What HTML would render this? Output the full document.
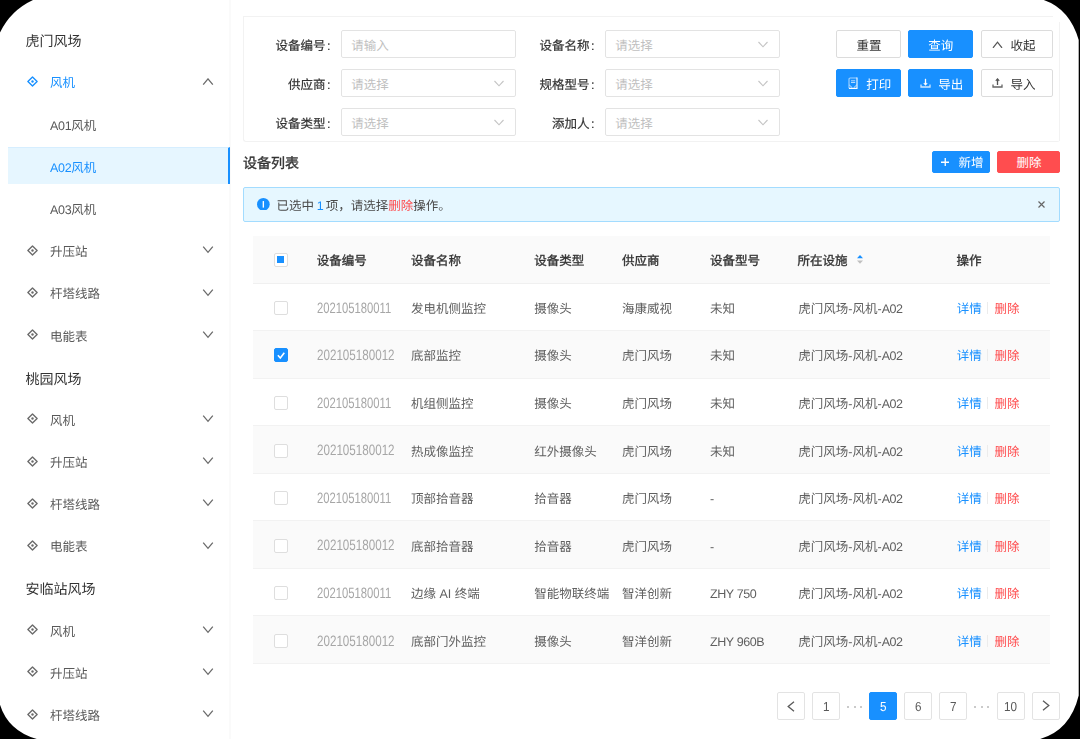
<!DOCTYPE html><html lang="zh-CN"><head><meta charset="utf-8"><style>
*{box-sizing:border-box;margin:0;padding:0}
html,body{width:1080px;height:739px;overflow:hidden;background:#000}
body{font-family:"Liberation Sans",sans-serif;text-rendering:geometricPrecision;font-size:12.5px;color:#595959;position:relative}
.frame{position:absolute;left:0;top:0;width:1080px;height:739px;background:#fff;overflow:hidden}
.content{position:absolute;left:0;top:0;width:1080px;height:739px;filter:blur(0.45px)}
.abs{position:absolute;white-space:nowrap}
.t{position:absolute;white-space:nowrap;line-height:20px;height:20px}
.side{position:absolute;left:0;top:0;width:231px;height:739px;border-right:2px solid #fafafa}
.gt{position:absolute;left:26px;font-size:14px;color:#333;line-height:20px;height:20px;white-space:nowrap}
.it{position:absolute;left:50px;font-size:12.5px;color:#595959;line-height:20px;height:20px;white-space:nowrap}
.ico{position:absolute;left:26.5px;width:11px;height:11px}
.chev{position:absolute;left:202px;width:12px;height:8px}
.inp{position:absolute;width:175px;height:27.6px;border:1px solid #e3e3e3;border-radius:2px;background:#fff}
.ph{position:absolute;left:10px;top:4px;font-size:12.5px;color:#c4c4c4;line-height:20px}
.btn{position:absolute;height:28px;border-radius:2px;border:1px solid #dcdcdc;background:#fff}
.btn.p{background:#1890ff;border-color:#1890ff}
.lat{display:inline-block;transform-origin:0 50%}
.num{font-size:15px;transform:scaleX(.75);color:#a6a6a6}
.cb{position:absolute;left:274px;width:14px;height:14px;border:1px solid #dedede;border-radius:2px;background:#fff}
.pg{position:absolute;top:692px;width:28px;height:28px;border:1px solid #e3e3e3;border-radius:2px;background:#fff}
</style></head><body><div class="frame"><div class="content">
<div class="side"></div>
<div class="t" style="left:25.5px;top:31.00px;font-size:14px;color:#333;font-weight:400;">虎门风场</div>
<svg class="ico" style="top:75.79px" viewBox="0 0 11 11"><path d="M5.5 0.9 L10.1 5.5 L5.5 10.1 L0.9 5.5 Z" fill="none" stroke="#1890ff" stroke-width="1.35" stroke-linejoin="round"/><circle cx="5.5" cy="5.5" r="1.2" fill="#1890ff"/></svg>
<div class="t" style="left:50px;top:73.39px;font-size:12.5px;color:#1890ff;font-weight:400;">风机</div>
<svg class="chev" style="top:77.59px" viewBox="0 0 12 8"><path d="M1.2 6.6 L6 0.9 L10.8 6.6" fill="none" stroke="#6a6a6a" stroke-width="1.3"/></svg>
<div class="t" style="left:50px;top:115.58px;font-size:12.5px;color:#595959;font-weight:400;"><span class="lat" style="letter-spacing:-0.3px">A01</span>风机</div>
<div class="abs" style="left:8px;top:147px;width:222px;height:37px;background:#e6f6ff;border-top:1px solid #d6eeff;border-right:2.5px solid #1890ff"></div>
<div class="t" style="left:50px;top:157.77px;font-size:12.5px;color:#1890ff;font-weight:400;"><span class="lat" style="letter-spacing:-0.3px">A02</span>风机</div>
<div class="t" style="left:50px;top:199.96px;font-size:12.5px;color:#595959;font-weight:400;"><span class="lat" style="letter-spacing:-0.3px">A03</span>风机</div>
<svg class="ico" style="top:244.55px" viewBox="0 0 11 11"><path d="M5.5 0.9 L10.1 5.5 L5.5 10.1 L0.9 5.5 Z" fill="none" stroke="#6b6b6b" stroke-width="1.35" stroke-linejoin="round"/><circle cx="5.5" cy="5.5" r="1.2" fill="#6b6b6b"/></svg>
<div class="t" style="left:50px;top:242.15px;font-size:12.5px;color:#595959;font-weight:400;">升压站</div>
<svg class="chev" style="top:246.35px" viewBox="0 0 12 8"><path d="M1.2 0.6 L6 6.3 L10.8 0.6" fill="none" stroke="#6a6a6a" stroke-width="1.3"/></svg>
<svg class="ico" style="top:286.74px" viewBox="0 0 11 11"><path d="M5.5 0.9 L10.1 5.5 L5.5 10.1 L0.9 5.5 Z" fill="none" stroke="#6b6b6b" stroke-width="1.35" stroke-linejoin="round"/><circle cx="5.5" cy="5.5" r="1.2" fill="#6b6b6b"/></svg>
<div class="t" style="left:50px;top:284.34px;font-size:12.5px;color:#595959;font-weight:400;">杆塔线路</div>
<svg class="chev" style="top:288.54px" viewBox="0 0 12 8"><path d="M1.2 0.6 L6 6.3 L10.8 0.6" fill="none" stroke="#6a6a6a" stroke-width="1.3"/></svg>
<svg class="ico" style="top:328.93px" viewBox="0 0 11 11"><path d="M5.5 0.9 L10.1 5.5 L5.5 10.1 L0.9 5.5 Z" fill="none" stroke="#6b6b6b" stroke-width="1.35" stroke-linejoin="round"/><circle cx="5.5" cy="5.5" r="1.2" fill="#6b6b6b"/></svg>
<div class="t" style="left:50px;top:326.53px;font-size:12.5px;color:#595959;font-weight:400;">电能表</div>
<svg class="chev" style="top:330.73px" viewBox="0 0 12 8"><path d="M1.2 0.6 L6 6.3 L10.8 0.6" fill="none" stroke="#6a6a6a" stroke-width="1.3"/></svg>
<div class="t" style="left:25.5px;top:368.52px;font-size:14px;color:#333;font-weight:400;">桃园风场</div>
<svg class="ico" style="top:413.31px" viewBox="0 0 11 11"><path d="M5.5 0.9 L10.1 5.5 L5.5 10.1 L0.9 5.5 Z" fill="none" stroke="#6b6b6b" stroke-width="1.35" stroke-linejoin="round"/><circle cx="5.5" cy="5.5" r="1.2" fill="#6b6b6b"/></svg>
<div class="t" style="left:50px;top:410.91px;font-size:12.5px;color:#595959;font-weight:400;">风机</div>
<svg class="chev" style="top:415.11px" viewBox="0 0 12 8"><path d="M1.2 0.6 L6 6.3 L10.8 0.6" fill="none" stroke="#6a6a6a" stroke-width="1.3"/></svg>
<svg class="ico" style="top:455.50px" viewBox="0 0 11 11"><path d="M5.5 0.9 L10.1 5.5 L5.5 10.1 L0.9 5.5 Z" fill="none" stroke="#6b6b6b" stroke-width="1.35" stroke-linejoin="round"/><circle cx="5.5" cy="5.5" r="1.2" fill="#6b6b6b"/></svg>
<div class="t" style="left:50px;top:453.10px;font-size:12.5px;color:#595959;font-weight:400;">升压站</div>
<svg class="chev" style="top:457.30px" viewBox="0 0 12 8"><path d="M1.2 0.6 L6 6.3 L10.8 0.6" fill="none" stroke="#6a6a6a" stroke-width="1.3"/></svg>
<svg class="ico" style="top:497.69px" viewBox="0 0 11 11"><path d="M5.5 0.9 L10.1 5.5 L5.5 10.1 L0.9 5.5 Z" fill="none" stroke="#6b6b6b" stroke-width="1.35" stroke-linejoin="round"/><circle cx="5.5" cy="5.5" r="1.2" fill="#6b6b6b"/></svg>
<div class="t" style="left:50px;top:495.29px;font-size:12.5px;color:#595959;font-weight:400;">杆塔线路</div>
<svg class="chev" style="top:499.49px" viewBox="0 0 12 8"><path d="M1.2 0.6 L6 6.3 L10.8 0.6" fill="none" stroke="#6a6a6a" stroke-width="1.3"/></svg>
<svg class="ico" style="top:539.88px" viewBox="0 0 11 11"><path d="M5.5 0.9 L10.1 5.5 L5.5 10.1 L0.9 5.5 Z" fill="none" stroke="#6b6b6b" stroke-width="1.35" stroke-linejoin="round"/><circle cx="5.5" cy="5.5" r="1.2" fill="#6b6b6b"/></svg>
<div class="t" style="left:50px;top:537.48px;font-size:12.5px;color:#595959;font-weight:400;">电能表</div>
<svg class="chev" style="top:541.68px" viewBox="0 0 12 8"><path d="M1.2 0.6 L6 6.3 L10.8 0.6" fill="none" stroke="#6a6a6a" stroke-width="1.3"/></svg>
<div class="t" style="left:25.5px;top:579.47px;font-size:14px;color:#333;font-weight:400;">安临站风场</div>
<svg class="ico" style="top:624.26px" viewBox="0 0 11 11"><path d="M5.5 0.9 L10.1 5.5 L5.5 10.1 L0.9 5.5 Z" fill="none" stroke="#6b6b6b" stroke-width="1.35" stroke-linejoin="round"/><circle cx="5.5" cy="5.5" r="1.2" fill="#6b6b6b"/></svg>
<div class="t" style="left:50px;top:621.86px;font-size:12.5px;color:#595959;font-weight:400;">风机</div>
<svg class="chev" style="top:626.06px" viewBox="0 0 12 8"><path d="M1.2 0.6 L6 6.3 L10.8 0.6" fill="none" stroke="#6a6a6a" stroke-width="1.3"/></svg>
<svg class="ico" style="top:666.45px" viewBox="0 0 11 11"><path d="M5.5 0.9 L10.1 5.5 L5.5 10.1 L0.9 5.5 Z" fill="none" stroke="#6b6b6b" stroke-width="1.35" stroke-linejoin="round"/><circle cx="5.5" cy="5.5" r="1.2" fill="#6b6b6b"/></svg>
<div class="t" style="left:50px;top:664.05px;font-size:12.5px;color:#595959;font-weight:400;">升压站</div>
<svg class="chev" style="top:668.25px" viewBox="0 0 12 8"><path d="M1.2 0.6 L6 6.3 L10.8 0.6" fill="none" stroke="#6a6a6a" stroke-width="1.3"/></svg>
<svg class="ico" style="top:708.64px" viewBox="0 0 11 11"><path d="M5.5 0.9 L10.1 5.5 L5.5 10.1 L0.9 5.5 Z" fill="none" stroke="#6b6b6b" stroke-width="1.35" stroke-linejoin="round"/><circle cx="5.5" cy="5.5" r="1.2" fill="#6b6b6b"/></svg>
<div class="t" style="left:50px;top:706.24px;font-size:12.5px;color:#595959;font-weight:400;">杆塔线路</div>
<svg class="chev" style="top:710.44px" viewBox="0 0 12 8"><path d="M1.2 0.6 L6 6.3 L10.8 0.6" fill="none" stroke="#6a6a6a" stroke-width="1.3"/></svg>
<div class="abs" style="left:242.5px;top:16px;width:817.5px;height:126px;border-left:1px solid #f2f2f2;border-bottom:1px solid #f2f2f2;border-radius:0 0 3px 3px"></div>
<div class="abs" style="left:243px;top:16px;width:810px;height:1px;background:#f2f2f2"></div>
<div class="abs" style="left:1059px;top:22px;width:1px;height:119px;background:#f2f2f2"></div>
<div class="t" style="left:181px;width:149.5px;text-align:right;top:35.90px;font-size:12.5px;color:#333;-webkit-text-stroke:0.2px #333">设备编号<span style="margin-left:1.6px">:</span></div>
<div class="inp" style="left:341.4px;top:30.40px"></div>
<div class="t" style="left:351.2px;top:35.90px;font-size:12.5px;color:#c0c0c0;font-weight:400;">请输入</div>
<div class="t" style="left:181px;width:149.5px;text-align:right;top:74.90px;font-size:12.5px;color:#333;-webkit-text-stroke:0.2px #333">供应商<span style="margin-left:1.6px">:</span></div>
<div class="inp" style="left:341.4px;top:69.40px"></div>
<div class="t" style="left:351.2px;top:74.90px;font-size:12.5px;color:#c0c0c0;font-weight:400;">请选择</div>
<svg class="abs" style="left:493px;top:80.40px;width:12px;height:7px" viewBox="0 0 12 7"><path d="M1.5 1 L6 5.8 L10.5 1" fill="none" stroke="#c4c4c4" stroke-width="1.1"/></svg>
<div class="t" style="left:181px;width:149.5px;text-align:right;top:113.90px;font-size:12.5px;color:#333;-webkit-text-stroke:0.2px #333">设备类型<span style="margin-left:1.6px">:</span></div>
<div class="inp" style="left:341.4px;top:108.40px"></div>
<div class="t" style="left:351.2px;top:113.90px;font-size:12.5px;color:#c0c0c0;font-weight:400;">请选择</div>
<svg class="abs" style="left:493px;top:119.40px;width:12px;height:7px" viewBox="0 0 12 7"><path d="M1.5 1 L6 5.8 L10.5 1" fill="none" stroke="#c4c4c4" stroke-width="1.1"/></svg>
<div class="t" style="left:445px;width:149.5px;text-align:right;top:35.90px;font-size:12.5px;color:#333;-webkit-text-stroke:0.2px #333">设备名称<span style="margin-left:1.6px">:</span></div>
<div class="inp" style="left:605.4px;top:30.40px"></div>
<div class="t" style="left:615.2px;top:35.90px;font-size:12.5px;color:#c0c0c0;font-weight:400;">请选择</div>
<svg class="abs" style="left:757px;top:41.40px;width:12px;height:7px" viewBox="0 0 12 7"><path d="M1.5 1 L6 5.8 L10.5 1" fill="none" stroke="#c4c4c4" stroke-width="1.1"/></svg>
<div class="t" style="left:445px;width:149.5px;text-align:right;top:74.90px;font-size:12.5px;color:#333;-webkit-text-stroke:0.2px #333">规格型号<span style="margin-left:1.6px">:</span></div>
<div class="inp" style="left:605.4px;top:69.40px"></div>
<div class="t" style="left:615.2px;top:74.90px;font-size:12.5px;color:#c0c0c0;font-weight:400;">请选择</div>
<svg class="abs" style="left:757px;top:80.40px;width:12px;height:7px" viewBox="0 0 12 7"><path d="M1.5 1 L6 5.8 L10.5 1" fill="none" stroke="#c4c4c4" stroke-width="1.1"/></svg>
<div class="t" style="left:445px;width:149.5px;text-align:right;top:113.90px;font-size:12.5px;color:#333;-webkit-text-stroke:0.2px #333">添加人<span style="margin-left:1.6px">:</span></div>
<div class="inp" style="left:605.4px;top:108.40px"></div>
<div class="t" style="left:615.2px;top:113.90px;font-size:12.5px;color:#c0c0c0;font-weight:400;">请选择</div>
<svg class="abs" style="left:757px;top:119.40px;width:12px;height:7px" viewBox="0 0 12 7"><path d="M1.5 1 L6 5.8 L10.5 1" fill="none" stroke="#c4c4c4" stroke-width="1.1"/></svg>
<div class="btn" style="left:835.7px;top:30.3px;width:65px;height:27.7px;"></div>
<div class="t" style="left:856.5px;top:36.20px;font-size:12.5px;color:#333;font-weight:400;">重置</div>
<div class="btn p" style="left:908.2px;top:30.3px;width:64.5px;height:27.7px;"></div>
<div class="t" style="left:928.3px;top:36.20px;font-size:12.5px;color:#fff;font-weight:400;">查询</div>
<div class="btn" style="left:980.6px;top:30.3px;width:72px;height:27.7px;"></div>
<svg class="abs" style="left:991.5px;top:40.8px;width:11px;height:7.5px" viewBox="0 0 11 7.5"><path d="M1 6.8 L5.5 1.2 L10 6.8" fill="none" stroke="#555" stroke-width="1.3"/></svg>
<div class="t" style="left:1010.5px;top:36.20px;font-size:12.5px;color:#333;font-weight:400;">收起</div>
<div class="btn p" style="left:835.7px;top:69.1px;width:65px;height:27.7px;"></div>
<svg class="abs" style="left:847.5px;top:76.7px;width:10px;height:12px" viewBox="0 0 10 12"><path d="M1 11.2 V2.2 Q1 1 2.2 1 L9 1" fill="none" stroke="rgba(255,255,255,.6)" stroke-width="1.1"/><path d="M9 0.6 V11.4 H1" fill="none" stroke="#fff" stroke-width="1.1"/><path d="M3 3.8 H7.2 M3 5.5 H7.2" stroke="rgba(255,255,255,.75)" stroke-width="0.9"/><path d="M1.3 8 L4.2 10.6 M8.7 8 L5.8 10.6" fill="none" stroke="rgba(255,255,255,.75)" stroke-width="1"/></svg>
<div class="t" style="left:866.2px;top:74.50px;font-size:12.5px;color:#fff;font-weight:400;">打印</div>
<div class="btn p" style="left:908.2px;top:69.1px;width:64.5px;height:27.7px;"></div>
<svg class="abs" style="left:919.5px;top:77.5px;width:11px;height:10px" viewBox="0 0 11 10"><path d="M5.5 0.8 V6.8" stroke="#fff" stroke-width="1.3"/><path d="M3.8 5 L5.5 7 L7.2 5" fill="none" stroke="#fff" stroke-width="1.1"/><path d="M1 6.5 V9 H10 V6.5" fill="none" stroke="rgba(255,255,255,.8)" stroke-width="1.3"/></svg>
<div class="t" style="left:938.2px;top:74.50px;font-size:12.5px;color:#fff;font-weight:400;">导出</div>
<div class="btn" style="left:980.6px;top:69.1px;width:72px;height:27.7px;"></div>
<svg class="abs" style="left:991.5px;top:77.5px;width:11px;height:10px" viewBox="0 0 11 10"><path d="M5.5 1 V7" stroke="#555" stroke-width="1.3"/><path d="M3.8 2.8 L5.5 0.8 L7.2 2.8" fill="none" stroke="#555" stroke-width="1.1"/><path d="M1 6.5 V9 H10 V6.5" fill="none" stroke="#666" stroke-width="1.3"/></svg>
<div class="t" style="left:1010.5px;top:74.50px;font-size:12.5px;color:#333;font-weight:400;">导入</div>
<div class="t" style="left:243px;top:153.20px;font-size:14px;color:#333;font-weight:400;-webkit-text-stroke:0.35px #333">设备列表</div>
<div class="btn p" style="left:931.6px;top:151.1px;width:58px;height:21.7px;"></div>
<svg class="abs" style="left:940.7px;top:157.7px;width:8.5px;height:8.5px" viewBox="0 0 8.5 8.5"><path d="M4.25 0 V8.5 M0 4.25 H8.5" stroke="#fff" stroke-width="1.3"/></svg>
<div class="t" style="left:958.4px;top:153.00px;font-size:12.5px;color:#fff;font-weight:400;">新增</div>
<div class="btn" style="left:996.7px;top:151.1px;width:63.3px;height:21.7px;background:#ff4d4f;border-color:#ff4d4f;"></div>
<div class="t" style="left:1016.5px;top:153.00px;font-size:12.5px;color:#fff;font-weight:400;">删除</div>
<div class="abs" style="left:243px;top:186.6px;width:817px;height:35px;background:#e6f7ff;border:1px solid #a3dcff;border-radius:2px"></div>
<svg class="abs" style="left:257.1px;top:197.8px;width:12.7px;height:12.7px" viewBox="0 0 12 12"><circle cx="6" cy="6" r="6" fill="#1890ff"/><rect x="5.35" y="2.9" width="1.3" height="6.2" fill="#fff"/></svg>
<div class="t" style="left:276.6px;top:196.20px;font-size:12.5px;color:#4a4a4a;font-weight:400;">已选中<span style="color:#1890ff;margin:0 2.1px 0 2.6px">1</span>项，请选择<span style="color:#ff4d4f">删除</span>操作。</div>
<svg class="abs" style="left:1037.5px;top:200.5px;width:7px;height:7px" viewBox="0 0 7 7"><path d="M0.5 0.5 L6.5 6.5 M6.5 0.5 L0.5 6.5" stroke="#666" stroke-width="1.2"/></svg>
<div class="abs" style="left:253px;top:235.6px;width:797px;height:48px;background:#fafafa;border-bottom:1px solid #f0f0f0"></div>
<div class="t" style="left:316.7px;top:251.30px;font-size:12.5px;color:#333;font-weight:400;-webkit-text-stroke:0.35px #333">设备编号</div>
<div class="t" style="left:411px;top:251.30px;font-size:12.5px;color:#333;font-weight:400;-webkit-text-stroke:0.35px #333">设备名称</div>
<div class="t" style="left:534.3px;top:251.30px;font-size:12.5px;color:#333;font-weight:400;-webkit-text-stroke:0.35px #333">设备类型</div>
<div class="t" style="left:622px;top:251.30px;font-size:12.5px;color:#333;font-weight:400;-webkit-text-stroke:0.35px #333">供应商</div>
<div class="t" style="left:710px;top:251.30px;font-size:12.5px;color:#333;font-weight:400;-webkit-text-stroke:0.35px #333">设备型号</div>
<div class="t" style="left:797.6px;top:251.30px;font-size:12.5px;color:#333;font-weight:400;-webkit-text-stroke:0.35px #333">所在设施</div>
<div class="t" style="left:956.5px;top:251.30px;font-size:12.5px;color:#333;font-weight:400;-webkit-text-stroke:0.35px #333">操作</div>
<svg class="abs" style="left:857px;top:255px;width:6px;height:9px" viewBox="0 0 6 9"><path d="M3 0 L6 3.3 L0 3.3 Z" fill="#1890ff"/><path d="M0 5.4 L6 5.4 L3 8.7 Z" fill="#bfbfbf"/></svg>
<div class="cb" style="top:253px;"><div class="abs" style="left:1.9px;top:1.8px;width:7.5px;height:7.5px;background:#1890ff"></div></div>
<div class="abs" style="left:253px;top:283.60px;width:797px;height:47.55px;background:#fff;border-bottom:1px solid #f2f2f2"></div>
<div class="cb" style="top:300.88px"></div>
<div class="t" style="left:316.7px;top:298.68px;line-height:20px"><span class="lat num" style="transform:scaleX(.75)">202105180011</span></div>
<div class="t" style="left:411px;top:298.88px;font-size:12.5px;color:#606060;font-weight:400;">发电机侧监控</div>
<div class="t" style="left:534.3px;top:298.88px;font-size:12.5px;color:#606060;font-weight:400;">摄像头</div>
<div class="t" style="left:622px;top:298.88px;font-size:12.5px;color:#606060;font-weight:400;">海康威视</div>
<div class="t" style="left:710px;top:298.88px;font-size:12.5px;color:#606060;font-weight:400;">未知</div>
<div class="t" style="left:798.3px;top:298.88px;font-size:12.5px;color:#606060;font-weight:400;">虎门风场-风机-<span class="lat" style="letter-spacing:-0.5px">A02</span></div>
<div class="t" style="left:956.7px;top:298.88px;font-size:12.5px;color:#1890ff;font-weight:400;">详情</div>
<div class="abs" style="left:987.2px;top:301.88px;width:1px;height:12px;background:#ececec"></div>
<div class="t" style="left:994.4px;top:298.88px;font-size:12.5px;color:#ff4d4f;font-weight:400;">删除</div>
<div class="abs" style="left:253px;top:331.15px;width:797px;height:47.55px;background:#fafafa;border-bottom:1px solid #f2f2f2"></div>
<div class="cb" style="top:348.43px;background:#1890ff;border-color:#1890ff"><svg class="abs" style="left:1px;top:1px;width:12px;height:12px" viewBox="0 0 12 12"><path d="M1.9 5.2 L4.3 8 L8.3 2.8" fill="none" stroke="#fff" stroke-width="1.6"/></svg></div>
<div class="t" style="left:316.7px;top:346.23px;line-height:20px"><span class="lat num" style="transform:scaleX(.775)">202105180012</span></div>
<div class="t" style="left:411px;top:346.43px;font-size:12.5px;color:#606060;font-weight:400;">底部监控</div>
<div class="t" style="left:534.3px;top:346.43px;font-size:12.5px;color:#606060;font-weight:400;">摄像头</div>
<div class="t" style="left:622px;top:346.43px;font-size:12.5px;color:#606060;font-weight:400;">虎门风场</div>
<div class="t" style="left:710px;top:346.43px;font-size:12.5px;color:#606060;font-weight:400;">未知</div>
<div class="t" style="left:798.3px;top:346.43px;font-size:12.5px;color:#606060;font-weight:400;">虎门风场-风机-<span class="lat" style="letter-spacing:-0.5px">A02</span></div>
<div class="t" style="left:956.7px;top:346.43px;font-size:12.5px;color:#1890ff;font-weight:400;">详情</div>
<div class="abs" style="left:987.2px;top:349.43px;width:1px;height:12px;background:#ececec"></div>
<div class="t" style="left:994.4px;top:346.43px;font-size:12.5px;color:#ff4d4f;font-weight:400;">删除</div>
<div class="abs" style="left:253px;top:378.70px;width:797px;height:47.55px;background:#fff;border-bottom:1px solid #f2f2f2"></div>
<div class="cb" style="top:395.98px"></div>
<div class="t" style="left:316.7px;top:393.78px;line-height:20px"><span class="lat num" style="transform:scaleX(.75)">202105180011</span></div>
<div class="t" style="left:411px;top:393.98px;font-size:12.5px;color:#606060;font-weight:400;">机组侧监控</div>
<div class="t" style="left:534.3px;top:393.98px;font-size:12.5px;color:#606060;font-weight:400;">摄像头</div>
<div class="t" style="left:622px;top:393.98px;font-size:12.5px;color:#606060;font-weight:400;">虎门风场</div>
<div class="t" style="left:710px;top:393.98px;font-size:12.5px;color:#606060;font-weight:400;">未知</div>
<div class="t" style="left:798.3px;top:393.98px;font-size:12.5px;color:#606060;font-weight:400;">虎门风场-风机-<span class="lat" style="letter-spacing:-0.5px">A02</span></div>
<div class="t" style="left:956.7px;top:393.98px;font-size:12.5px;color:#1890ff;font-weight:400;">详情</div>
<div class="abs" style="left:987.2px;top:396.98px;width:1px;height:12px;background:#ececec"></div>
<div class="t" style="left:994.4px;top:393.98px;font-size:12.5px;color:#ff4d4f;font-weight:400;">删除</div>
<div class="abs" style="left:253px;top:426.25px;width:797px;height:47.55px;background:#fafafa;border-bottom:1px solid #f2f2f2"></div>
<div class="cb" style="top:443.52px"></div>
<div class="t" style="left:316.7px;top:441.32px;line-height:20px"><span class="lat num" style="transform:scaleX(.775)">202105180012</span></div>
<div class="t" style="left:411px;top:441.52px;font-size:12.5px;color:#606060;font-weight:400;">热成像监控</div>
<div class="t" style="left:534.3px;top:441.52px;font-size:12.5px;color:#606060;font-weight:400;">红外摄像头</div>
<div class="t" style="left:622px;top:441.52px;font-size:12.5px;color:#606060;font-weight:400;">虎门风场</div>
<div class="t" style="left:710px;top:441.52px;font-size:12.5px;color:#606060;font-weight:400;">未知</div>
<div class="t" style="left:798.3px;top:441.52px;font-size:12.5px;color:#606060;font-weight:400;">虎门风场-风机-<span class="lat" style="letter-spacing:-0.5px">A02</span></div>
<div class="t" style="left:956.7px;top:441.52px;font-size:12.5px;color:#1890ff;font-weight:400;">详情</div>
<div class="abs" style="left:987.2px;top:444.52px;width:1px;height:12px;background:#ececec"></div>
<div class="t" style="left:994.4px;top:441.52px;font-size:12.5px;color:#ff4d4f;font-weight:400;">删除</div>
<div class="abs" style="left:253px;top:473.80px;width:797px;height:47.55px;background:#fff;border-bottom:1px solid #f2f2f2"></div>
<div class="cb" style="top:491.07px"></div>
<div class="t" style="left:316.7px;top:488.88px;line-height:20px"><span class="lat num" style="transform:scaleX(.75)">202105180011</span></div>
<div class="t" style="left:411px;top:489.07px;font-size:12.5px;color:#606060;font-weight:400;">顶部拾音器</div>
<div class="t" style="left:534.3px;top:489.07px;font-size:12.5px;color:#606060;font-weight:400;">拾音器</div>
<div class="t" style="left:622px;top:489.07px;font-size:12.5px;color:#606060;font-weight:400;">虎门风场</div>
<div class="t" style="left:710px;top:489.07px;font-size:12.5px;color:#606060;font-weight:400;">-</div>
<div class="t" style="left:798.3px;top:489.07px;font-size:12.5px;color:#606060;font-weight:400;">虎门风场-风机-<span class="lat" style="letter-spacing:-0.5px">A02</span></div>
<div class="t" style="left:956.7px;top:489.07px;font-size:12.5px;color:#1890ff;font-weight:400;">详情</div>
<div class="abs" style="left:987.2px;top:492.07px;width:1px;height:12px;background:#ececec"></div>
<div class="t" style="left:994.4px;top:489.07px;font-size:12.5px;color:#ff4d4f;font-weight:400;">删除</div>
<div class="abs" style="left:253px;top:521.35px;width:797px;height:47.55px;background:#fafafa;border-bottom:1px solid #f2f2f2"></div>
<div class="cb" style="top:538.62px"></div>
<div class="t" style="left:316.7px;top:536.42px;line-height:20px"><span class="lat num" style="transform:scaleX(.775)">202105180012</span></div>
<div class="t" style="left:411px;top:536.62px;font-size:12.5px;color:#606060;font-weight:400;">底部拾音器</div>
<div class="t" style="left:534.3px;top:536.62px;font-size:12.5px;color:#606060;font-weight:400;">拾音器</div>
<div class="t" style="left:622px;top:536.62px;font-size:12.5px;color:#606060;font-weight:400;">虎门风场</div>
<div class="t" style="left:710px;top:536.62px;font-size:12.5px;color:#606060;font-weight:400;">-</div>
<div class="t" style="left:798.3px;top:536.62px;font-size:12.5px;color:#606060;font-weight:400;">虎门风场-风机-<span class="lat" style="letter-spacing:-0.5px">A02</span></div>
<div class="t" style="left:956.7px;top:536.62px;font-size:12.5px;color:#1890ff;font-weight:400;">详情</div>
<div class="abs" style="left:987.2px;top:539.62px;width:1px;height:12px;background:#ececec"></div>
<div class="t" style="left:994.4px;top:536.62px;font-size:12.5px;color:#ff4d4f;font-weight:400;">删除</div>
<div class="abs" style="left:253px;top:568.90px;width:797px;height:47.55px;background:#fff;border-bottom:1px solid #f2f2f2"></div>
<div class="cb" style="top:586.17px"></div>
<div class="t" style="left:316.7px;top:583.97px;line-height:20px"><span class="lat num" style="transform:scaleX(.75)">202105180011</span></div>
<div class="t" style="left:411px;top:584.17px;font-size:12.5px;color:#606060;font-weight:400;">边缘 AI 终端</div>
<div class="t" style="left:534.3px;top:584.17px;font-size:12.5px;color:#606060;font-weight:400;">智能物联终端</div>
<div class="t" style="left:622px;top:584.17px;font-size:12.5px;color:#606060;font-weight:400;">智洋创新</div>
<div class="t" style="left:710px;top:584.17px;font-size:12.5px;color:#606060;font-weight:400;"><span class="lat" style="font-size:12.5px;letter-spacing:-0.4px">ZHY 750</span></div>
<div class="t" style="left:798.3px;top:584.17px;font-size:12.5px;color:#606060;font-weight:400;">虎门风场-风机-<span class="lat" style="letter-spacing:-0.5px">A02</span></div>
<div class="t" style="left:956.7px;top:584.17px;font-size:12.5px;color:#1890ff;font-weight:400;">详情</div>
<div class="abs" style="left:987.2px;top:587.17px;width:1px;height:12px;background:#ececec"></div>
<div class="t" style="left:994.4px;top:584.17px;font-size:12.5px;color:#ff4d4f;font-weight:400;">删除</div>
<div class="abs" style="left:253px;top:616.45px;width:797px;height:47.55px;background:#fafafa;border-bottom:1px solid #f2f2f2"></div>
<div class="cb" style="top:633.73px"></div>
<div class="t" style="left:316.7px;top:631.52px;line-height:20px"><span class="lat num" style="transform:scaleX(.775)">202105180012</span></div>
<div class="t" style="left:411px;top:631.73px;font-size:12.5px;color:#606060;font-weight:400;">底部门外监控</div>
<div class="t" style="left:534.3px;top:631.73px;font-size:12.5px;color:#606060;font-weight:400;">摄像头</div>
<div class="t" style="left:622px;top:631.73px;font-size:12.5px;color:#606060;font-weight:400;">智洋创新</div>
<div class="t" style="left:710px;top:631.73px;font-size:12.5px;color:#606060;font-weight:400;"><span class="lat" style="font-size:12.5px;letter-spacing:-0.4px">ZHY 960B</span></div>
<div class="t" style="left:798.3px;top:631.73px;font-size:12.5px;color:#606060;font-weight:400;">虎门风场-风机-<span class="lat" style="letter-spacing:-0.5px">A02</span></div>
<div class="t" style="left:956.7px;top:631.73px;font-size:12.5px;color:#1890ff;font-weight:400;">详情</div>
<div class="abs" style="left:987.2px;top:634.73px;width:1px;height:12px;background:#ececec"></div>
<div class="t" style="left:994.4px;top:631.73px;font-size:12.5px;color:#ff4d4f;font-weight:400;">删除</div>
<div class="pg" style="left:777.1px"></div>
<svg class="abs" style="left:786.5px;top:700.5px;width:8px;height:11px" viewBox="0 0 8 11"><path d="M7 0.8 L1.2 5.5 L7 10.2" fill="none" stroke="#595959" stroke-width="1.3"/></svg>
<div class="pg" style="left:812.1px"></div>
<div class="t" style="left:813.1px;width:28px;text-align:center;top:696.7px;font-size:13px;color:#595959"><span class="lat" style="transform:scaleX(.9)">1</span></div>
<div class="pg" style="left:869.2px;background:#1890ff;border-color:#1890ff"></div>
<div class="t" style="left:869.2px;width:28px;text-align:center;top:696.7px;font-size:13px;color:#fff"><span class="lat" style="transform:scaleX(.9)">5</span></div>
<div class="pg" style="left:904.2px"></div>
<div class="t" style="left:904.2px;width:28px;text-align:center;top:696.7px;font-size:13px;color:#595959"><span class="lat" style="transform:scaleX(.9)">6</span></div>
<div class="pg" style="left:939.4px"></div>
<div class="t" style="left:939.4px;width:28px;text-align:center;top:696.7px;font-size:13px;color:#595959"><span class="lat" style="transform:scaleX(.9)">7</span></div>
<div class="pg" style="left:997px"></div>
<div class="t" style="left:997px;width:28px;text-align:center;top:696.7px;font-size:13px;color:#595959"><span class="lat" style="transform:scaleX(.9)">10</span></div>
<div class="pg" style="left:1032.2px"></div>
<svg class="abs" style="left:1042.1px;top:700.3px;width:8px;height:11px" viewBox="0 0 8 11"><path d="M1 0.8 L6.8 5.5 L1 10.2" fill="none" stroke="#595959" stroke-width="1.3"/></svg>
<div class="abs" style="left:847.3px;top:705.6px;width:2.2px;height:2.2px;border-radius:1.1px;background:#b8b8b8"></div>
<div class="abs" style="left:853.8px;top:705.6px;width:2.2px;height:2.2px;border-radius:1.1px;background:#b8b8b8"></div>
<div class="abs" style="left:860.3px;top:705.6px;width:2.2px;height:2.2px;border-radius:1.1px;background:#b8b8b8"></div>
<div class="abs" style="left:974.1px;top:705.6px;width:2.2px;height:2.2px;border-radius:1.1px;background:#b8b8b8"></div>
<div class="abs" style="left:980.6px;top:705.6px;width:2.2px;height:2.2px;border-radius:1.1px;background:#b8b8b8"></div>
<div class="abs" style="left:987.1px;top:705.6px;width:2.2px;height:2.2px;border-radius:1.1px;background:#b8b8b8"></div>
</div>
<svg class="abs" style="left:0;top:0;width:1080px;height:739px;z-index:50" viewBox="0 0 1080 739"><path fill="#000" fill-rule="evenodd" d="M0 0 H1080 V739 H0 Z M33 0 L1043.8 0 Q1069.7 9 1078.7 40 L1078.7 695.6 Q1070.2 730.5 1040.2 739 L36.8 739 Q8.2 730.8 0 704.7 L0 32.6 Q10.5 10.5 33 0 Z"/></svg>
</div></body></html>
